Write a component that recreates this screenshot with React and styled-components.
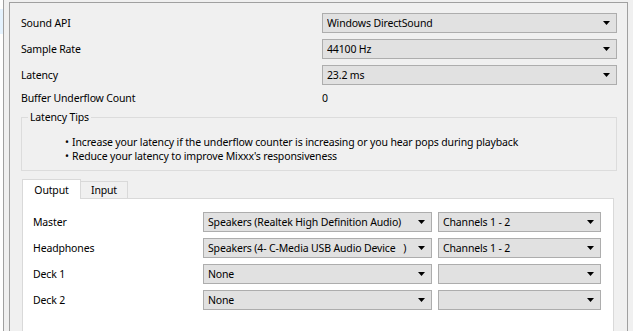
import React from "react";
import styled, { createGlobalStyle } from "styled-components";

const Global = createGlobalStyle`
  html, body { margin: 0; padding: 0; background: #f0f0f0; overflow: hidden; }
  body {
    font-family: "Noto Sans", "Open Sans", sans-serif;
    font-size: 10.5px;
    letter-spacing: -0.15px;
    color: #000;
  }
`;

const Page = styled.div`
  display: flex;
  align-items: flex-start;
  width: 633px;
  height: 331px;
  overflow: hidden;
`;

const SideList = styled.div`
  width: 3px;
  height: 331px;
  border-right: 1px solid #a0a0a0;
  background: linear-gradient(#ffffff 0 9px, #e5f3ff 9px 34px, #ffffff 34px);
  flex: none;
`;

const Frame = styled.div`
  margin: 2px 0 0 5px;
  width: 619px;
  height: 345px;
  box-sizing: border-box;
  border: 1px solid #a0a0a0;
  padding: 10px 10px 0 11px;
  display: flex;
  flex-direction: column;
  flex: none;
`;

const SettingsGrid = styled.div`
  display: grid;
  grid-template-columns: 301px 1fr;
  grid-template-rows: repeat(3, 20px) 14px;
  row-gap: 6px;
  align-items: center;
`;

const Label = styled.div`
  white-space: nowrap;
  line-height: 14px;
`;

const Value = styled.div`
  line-height: 14px;
`;

const Select = styled.div`
  display: flex;
  align-items: center;
  height: 20px;
  box-sizing: border-box;
  border: 1px solid #adadad;
  background: #e1e1e1;
  padding-left: 4px;
  min-width: 0;
`;

const SelectText = styled.span`
  flex: 1;
  white-space: pre;
  overflow: hidden;
  line-height: 14px;
`;

const ArrowBox = styled.span`
  width: 7px;
  height: 4px;
  margin-right: 6px;
  display: flex;
  flex: none;
`;

const Arrow = () => (
  <ArrowBox>
    <svg width="7" height="4" viewBox="0 0 7 4">
      <path d="M0 0H7L3.5 4Z" fill="#000" />
    </svg>
  </ArrowBox>
);

const Dropdown = ({ children }) => (
  <Select>
    <SelectText>{children}</SelectText>
    <Arrow />
  </Select>
);

const Tips = styled.fieldset`
  margin: 5px 0 0 0;
  padding: 11px 0 7px 0;
  border: 1px solid #dcdcdc;
  min-width: 0;
`;

const TipsTitle = styled.legend`
  margin-left: 6px;
  padding: 0 2px;
  line-height: 14px;
`;

const TipList = styled.ul`
  margin: 0;
  padding: 0 0 0 43px;
  list-style: none;
`;

const Tip = styled.li`
  line-height: 14px;
  white-space: nowrap;
  &::before {
    content: "•";
    display: inline-block;
    width: 7px;
  }
`;

const TabWidget = styled.div`
  margin: 8px 3px 0 1px;
  display: flex;
  flex-direction: column;
  flex: 1;
`;

const TabBar = styled.div`
  display: flex;
  align-items: flex-end;
  position: relative;
  z-index: 1;
  margin-bottom: -1px;
`;

const Tab = styled.div`
  box-sizing: border-box;
  height: ${(p) => (p.$active ? "20px" : "18px")};
  width: ${(p) => (p.$active ? "59px" : "48px")};
  justify-content: center;
  margin-left: ${(p) => (p.$active ? "0" : "-1px")};
  border: 1px solid #d9d9d9;
  border-bottom: ${(p) => (p.$active ? "none" : "1px solid #d9d9d9")};
  background: ${(p) => (p.$active ? "#ffffff" : "#f0f0f0")};
  display: flex;
  align-items: center;
  line-height: 14px;
  position: relative;
  z-index: ${(p) => (p.$active ? 2 : 1)};
`;

const Pane = styled.div`
  flex: 1;
  background: #fff;
  border: 1px solid #d9d9d9;
  padding: 13px 11px 0 10px;
`;

const DeviceGrid = styled.div`
  display: grid;
  grid-template-columns: 164px 229px 163px;
  column-gap: 6px;
  grid-auto-rows: 20px;
  row-gap: 6px;
  align-items: center;
`;

const settings = [
  ["Sound API", "Windows DirectSound"],
  ["Sample Rate", "44100 Hz"],
  ["Latency", "23.2 ms"],
];

const devices = [
  ["Master", "Speakers (Realtek High Definition Audio)", "Channels 1 - 2"],
  ["Headphones", "Speakers (4- C-Media USB Audio Device   )", "Channels 1 - 2"],
  ["Deck 1", "None", ""],
  ["Deck 2", "None", ""],
];

export default function App() {
  return (
    <>
      <Global />
      <Page>
        <SideList />
        <Frame>
          <SettingsGrid>
            {settings.map(([l, v]) => (
              <React.Fragment key={l}>
                <Label>{l}</Label>
                <Dropdown>{v}</Dropdown>
              </React.Fragment>
            ))}
            <Label>Buffer Underflow Count</Label>
            <Value>0</Value>
          </SettingsGrid>
          <Tips>
            <TipsTitle>Latency Tips</TipsTitle>
            <TipList>
              <Tip>Increase your latency if the underflow counter is increasing or you hear pops during playback</Tip>
              <Tip>Reduce your latency to improve Mixxx's responsiveness</Tip>
            </TipList>
          </Tips>
          <TabWidget>
            <TabBar>
              <Tab $active>Output</Tab>
              <Tab>Input</Tab>
            </TabBar>
            <Pane>
              <DeviceGrid>
                {devices.map(([l, d, c]) => (
                  <React.Fragment key={l}>
                    <Label>{l}</Label>
                    <Dropdown>{d}</Dropdown>
                    <Dropdown>{c}</Dropdown>
                  </React.Fragment>
                ))}
              </DeviceGrid>
            </Pane>
          </TabWidget>
        </Frame>
      </Page>
    </>
  );
}
